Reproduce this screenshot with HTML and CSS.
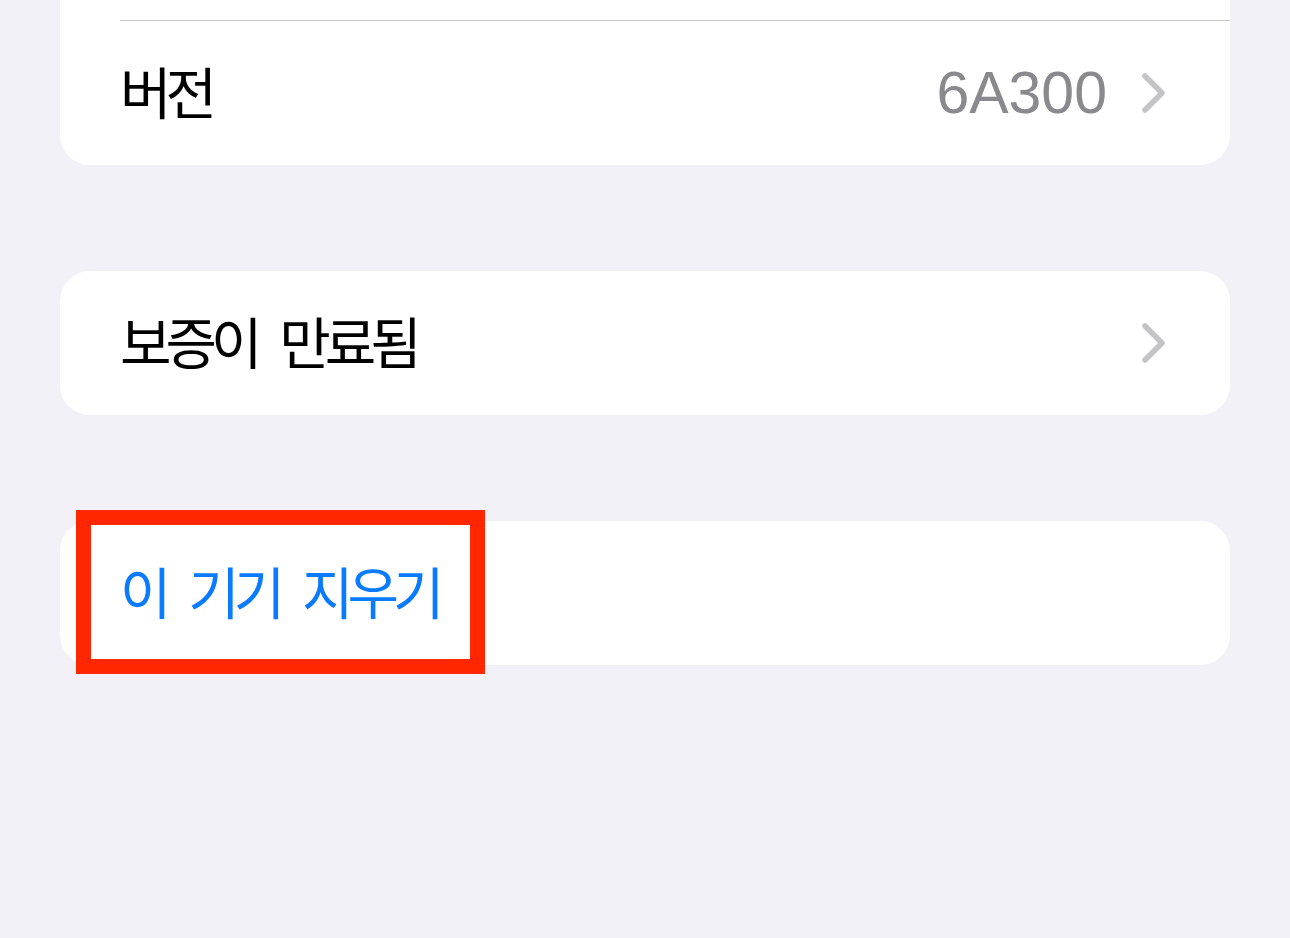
FILE: index.html
```html
<!DOCTYPE html>
<html lang="ko">
<head>
<meta charset="utf-8">
<title>정보</title>
<link rel="stylesheet" href="styles.css">
</head>
<body>
<div class="page">
  <section class="card card-first">
    <div class="row-tail"></div>
    <div class="row">
      <span class="label">버전</span>
      <span class="trail">
        <span class="value">6A300</span>
        <svg class="chev" width="26" height="42" viewBox="0 0 26 42"><path d="M4 4 L21 21 L4 38" fill="none" stroke="#c4c4c7" stroke-width="5.5" stroke-linecap="round" stroke-linejoin="round"/></svg>
      </span>
    </div>
  </section>

  <section class="card">
    <div class="row">
      <span class="label">보증이 만료됨</span>
      <span class="trail">
        <svg class="chev" width="26" height="42" viewBox="0 0 26 42"><path d="M4 4 L21 21 L4 38" fill="none" stroke="#c4c4c7" stroke-width="5.5" stroke-linecap="round" stroke-linejoin="round"/></svg>
      </span>
    </div>
  </section>

  <section class="card card-action">
    <div class="row">
      <span class="label action">이 기기 지우기</span>
    </div>
    <div class="highlight"></div>
  </section>
</div>
</body>
</html>
```

FILE: styles.css
```css
html, body {
  margin: 0;
  padding: 0;
  background: #f2f1f7;
  height: 100%;
  overflow: hidden;
}
.page {
  display: flex;
  flex-direction: column;
  gap: 106px;
  padding: 0 60px;
}
.card {
  background: #ffffff;
  border-radius: 30px;
  position: relative;
}
.card-first {
  border-top-left-radius: 0;
  border-top-right-radius: 0;
}
.row-tail {
  height: 20px;
  margin-left: 60px;
  border-bottom: 1px solid #c8c8ca;
}
.row {
  height: 144px;
  display: flex;
  align-items: center;
  justify-content: space-between;
  padding: 0 63px 0 60px;
}
.label {
  font-family: "Noto Sans CJK KR", "Noto Sans", sans-serif;
  font-size: 56px;
  letter-spacing: -6px;
  word-spacing: 13px;
  color: #000000;
  line-height: 1;
  padding-bottom: 7px;
}
.action {
  color: #0a7aff;
}
.trail {
  display: flex;
  align-items: center;
  gap: 34px;
}
.value {
  font-family: "Liberation Sans", Arial, sans-serif;
  font-size: 59px;
  color: #8a8a8e;
  line-height: 1;
}
.chev {
  display: block;
}
.highlight {
  position: absolute;
  left: 16px;
  top: -11px;
  width: 379px;
  height: 134px;
  border: 15px solid #ff2600;
}
```
